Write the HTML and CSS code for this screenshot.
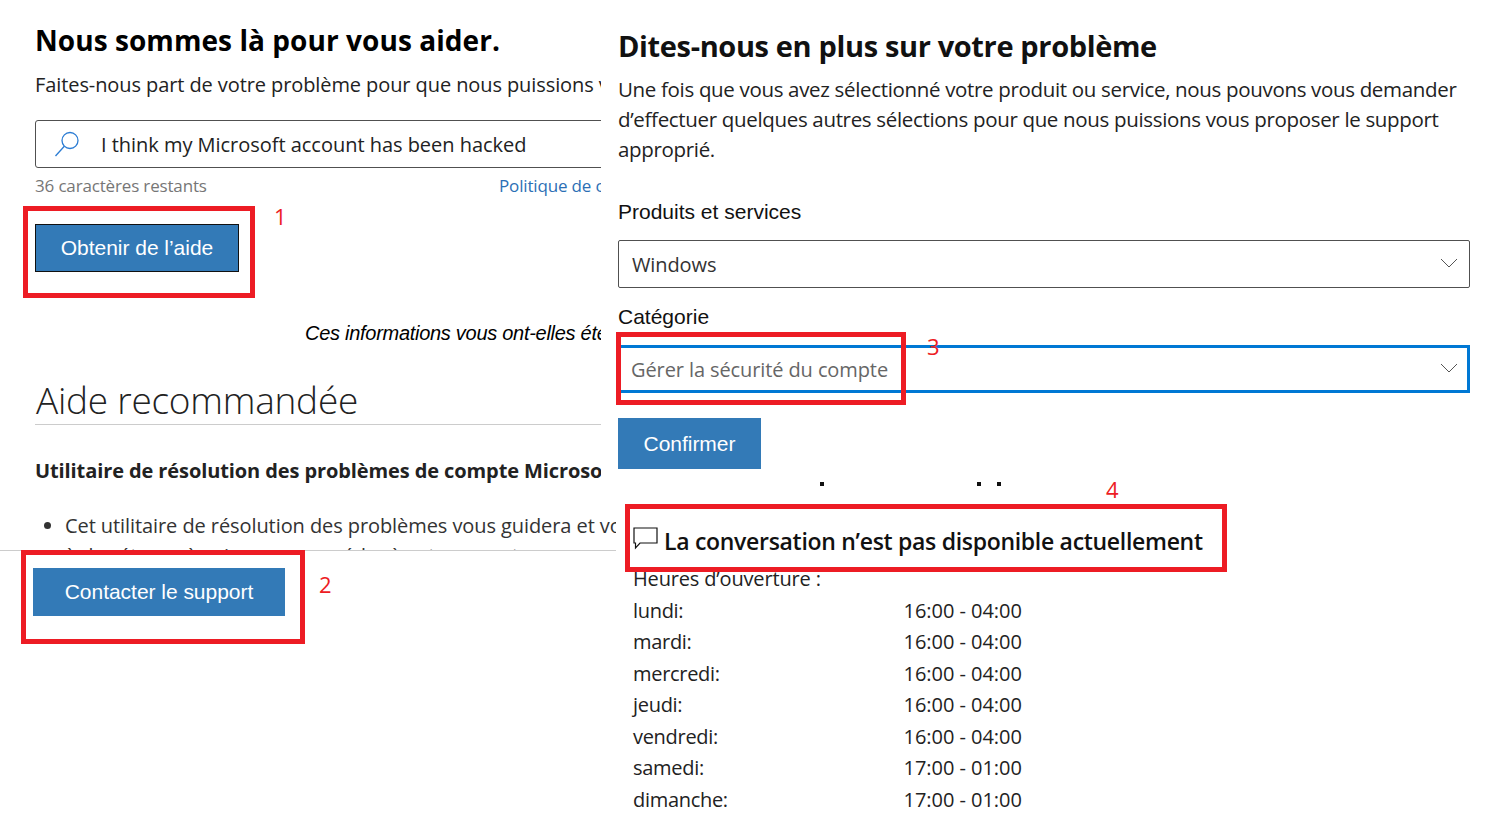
FILE: index.html
```html
<!DOCTYPE html>
<html lang="fr">
<head>
<meta charset="utf-8">
<title>Support</title>
<link rel="stylesheet" href="styles.css">
</head>
<body>
<div class="page">
  <section class="left">
    <div class="left-scroll">
      <div class="clip">
        <h1 class="title">Nous sommes là pour vous aider.</h1>
        <p class="intro">Faites-nous part de votre problème pour que nous puissions vous aider.</p>
        <div class="search">
          <svg class="search-icon" width="28" height="28" viewBox="0 0 28 28" fill="none" stroke="#2b7cd3" stroke-width="1.3"><circle cx="17" cy="10.5" r="8"/><path d="M11.3 16.2 2.5 26"/></svg>
          <span class="search-text">I think my Microsoft account has been hacked</span>
        </div>
        <div class="meta"><span class="count">36 caractères restants</span><a class="policy">Politique de confidentialité</a></div>
        <button class="btn btn-get">Obtenir de l’aide</button>
        <p class="feedback">Ces informations vous ont-elles été utiles ?</p>
        <h2 class="recommended">Aide recommandée</h2>
        <h3 class="tool">Utilitaire de résolution des problèmes de compte Microsoft</h3>
      </div>
      <ul class="bullets">
        <li>Cet utilitaire de résolution des problèmes vous guidera et vous aidera à répondre<br>à des étapes à suivre pour accéder à votre compte</li>
      </ul>
    </div>
    <div class="footer-bar"><button class="btn btn-contact">Contacter le support</button></div>
  </section>

  <section class="right">
    <h2 class="right-title">Dites-nous en plus sur votre problème</h2>
    <p class="right-text">Une fois que vous avez sélectionné votre produit ou service, nous pouvons vous demander d’effectuer quelques autres sélections pour que nous puissions vous proposer le support approprié.</p>
    <label class="field-label label-first">Produits et services</label>
    <div class="select">
      <span class="select-value">Windows</span>
      <svg width="18" height="10" viewBox="0 0 18 10" fill="none" stroke="#555" stroke-width="1"><path d="M1 1l8 8 8-8"/></svg>
    </div>
    <label class="field-label label-second">Catégorie</label>
    <div class="select select-focus">
      <span class="select-value muted">Gérer la sécurité du compte</span>
      <svg width="18" height="10" viewBox="0 0 18 10" fill="none" stroke="#555" stroke-width="1"><path d="M1 1l8 8 8-8"/></svg>
    </div>
    <button class="btn btn-confirm">Confirmer</button>
    <div class="chat">
      <svg class="chat-icon" width="25" height="24" viewBox="0 0 25 24" fill="none" stroke="#111" stroke-width="1.2"><path d="M1 2h23v15H7l-4.500 5V17H1z"/></svg>
      <span class="chat-text">La conversation n’est pas disponible actuellement</span>
    </div>
    <div class="hours">
      <div class="hours-head">Heures d’ouverture :</div>
      <div class="row"><span class="day">lundi:</span><span>16:00 - 04:00</span></div>
      <div class="row"><span class="day">mardi:</span><span>16:00 - 04:00</span></div>
      <div class="row"><span class="day">mercredi:</span><span>16:00 - 04:00</span></div>
      <div class="row"><span class="day">jeudi:</span><span>16:00 - 04:00</span></div>
      <div class="row"><span class="day">vendredi:</span><span>16:00 - 04:00</span></div>
      <div class="row"><span class="day">samedi:</span><span>17:00 - 01:00</span></div>
      <div class="row"><span class="day">dimanche:</span><span>17:00 - 01:00</span></div>
    </div>
  </section>

  <div class="mark mark-1"></div><span class="num num-1">1</span>
  <div class="mark mark-2"></div><span class="num num-2">2</span>
  <div class="mark mark-3"></div><span class="num num-3">3</span>
  <div class="mark mark-4"></div><span class="num num-4">4</span>
  <i class="tick tick-1"></i><i class="tick tick-2"></i><i class="tick tick-3"></i>
</div>
</body>
</html>
```
FILE: styles.css
```css
* { box-sizing: border-box; }
html, body { margin: 0; padding: 0; background: #fff; }
body { font-family: "Open Sans", "Noto Sans", sans-serif; color: #111; overflow: hidden; }
.page { position: relative; width: 1486px; height: 832px; display: grid; grid-template-columns: 618px 1fr; overflow: hidden; }

.left { display: flex; flex-direction: column; width: 616px; }
.left-scroll { height: 550px; overflow: hidden; padding-left: 35px; flex: none; }
.clip { width: 566px; overflow: hidden; }
.title { margin: 20px 0 0; font-size: 28px; line-height: 40px; font-weight: 700; color: #000; white-space: nowrap; letter-spacing: 0.06px; }
.intro { margin: 10px 0 0; font-size: 20px; line-height: 30px; white-space: nowrap; letter-spacing: -0.09px; color: #222; }
.search { margin-top: 20px; width: 600px; height: 48px; border: 1px solid #505050; border-radius: 3px; display: flex; align-items: center; padding-left: 17px; }
.search-icon { flex: none; }
.search-text { margin-left: 20px; font-size: 20px; white-space: nowrap; letter-spacing: -0.03px; color: #222; }
.meta { display: flex; justify-content: flex-start; height: 36px; padding-bottom: 2px; align-items: center; font-size: 17px; white-space: nowrap; letter-spacing: -0.16px; }
.count { color: #767676; width: 464px; flex: none; }
.policy { color: #2b6fb5; }
.btn { display: block; background: #337ab7; color: #fff; border: 0; padding: 0; font-family: "Liberation Sans", Arial, sans-serif; font-size: 21px; letter-spacing: -0.03px; }
.btn-get { margin-top: 20px; width: 204px; height: 48px; border: 1px solid #111; }
.feedback { margin: 49px 0 0 270px; font-family: "Liberation Sans", Arial, sans-serif; font-style: italic; font-size: 20px; line-height: 24px; white-space: nowrap; letter-spacing: -0.28px; color: #000; }
.recommended { margin: 32px 0 0; height: 48px; padding-left: 1px; border-bottom: 1px solid #ccc; font-size: 37px; line-height: 46px; font-weight: 300; color: #222; letter-spacing: -0.25px; }
.tool { margin: 31px 0 0; font-size: 20px; line-height: 30px; font-weight: 700; white-space: nowrap; color: #222; letter-spacing: -0.1px; }
.bullets { margin: 25px 0 0; padding: 0 0 0 30px; width: 581px; overflow: hidden; font-size: 20px; line-height: 30px; white-space: nowrap; letter-spacing: -0.08px; color: #333; }
.footer-bar { flex: none; border-top: 1px solid #ccc; padding: 17px 0 0 33px; }
.btn-contact { width: 252px; height: 48px; }

.right { padding-left: 0; }
.right-title { margin: 26px 0 0; font-size: 29px; line-height: 40px; font-weight: 700; color: #111; white-space: nowrap; letter-spacing: -0.36px; }
.right-text { margin: 8px 0 0; width: 852px; font-size: 20.500px; line-height: 30px; letter-spacing: -0.33px; color: #222; }
.field-label { display: block; font-family: "Liberation Sans", Arial, sans-serif; font-size: 21px; line-height: 24px; color: #111; }
.label-first { margin-top: 36px; }
.label-second { margin-top: 17px; }
.select { margin-top: 16px; width: 852px; height: 48px; border: 1px solid #505050; border-radius: 2px; display: flex; align-items: center; justify-content: space-between; padding: 0 11px 0 13px; }
.select svg { flex: none; margin-top: -2px; }
.select-value { font-size: 20px; letter-spacing: -0.1px; color: #333; }
.select-value.muted { color: #666; }
.select-focus { border: 3px solid #0078d4; border-radius: 0; padding-left: 10px; padding-right: 9px; }
.btn-confirm { margin-top: 25px; width: 143px; height: 51px; }
.chat { margin-top: 53px; margin-left: 14px; height: 38px; display: flex; align-items: center; }
.chat-icon { flex: none; margin: -6px 0 0 1px; }
.chat-text { margin-left: 6px; font-size: 23px; font-weight: 600; color: #111; white-space: nowrap; letter-spacing: -0.3px; }
.hours { margin: 3px 0 0 15px; font-size: 20px; letter-spacing: -0.04px; color: #222; }
.hours-head { line-height: 31.500px; letter-spacing: -0.16px; }
.row { display: grid; grid-template-columns: 270.500px 1fr; line-height: 31.500px; }
.day { letter-spacing: -0.3px; }

.mark { position: absolute; border: 5px solid #ed1c24; pointer-events: none; }
.mark-1 { left: 23px; top: 206px; width: 232px; height: 92px; }
.mark-2 { left: 21px; top: 550px; width: 284px; height: 94px; }
.mark-3 { left: 616px; top: 332px; width: 290px; height: 73px; }
.mark-4 { left: 625px; top: 504px; width: 602px; height: 68px; }
.num { position: absolute; color: #ed1c24; font-size: 22px; line-height: 26px; }
.num-1 { left: 274px; top: 203px; }
.num-2 { left: 319px; top: 571px; }
.num-3 { left: 927px; top: 333px; }
.num-4 { left: 1106px; top: 476px; }
.tick { position: absolute; top: 482px; width: 4px; height: 4px; background: #111; }
.tick-1 { left: 820px; }
.tick-2 { left: 977px; }
.tick-3 { left: 997px; }
```
